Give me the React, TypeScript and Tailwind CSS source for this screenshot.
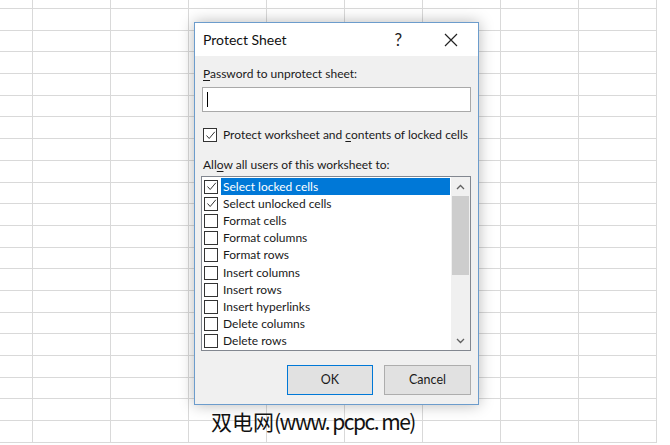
import React from 'react';

const items = [
  { label: 'Select locked cells', checked: true, selected: true },
  { label: 'Select unlocked cells', checked: true },
  { label: 'Format cells' },
  { label: 'Format columns' },
  { label: 'Format rows' },
  { label: 'Insert columns' },
  { label: 'Insert rows' },
  { label: 'Insert hyperlinks' },
  { label: 'Delete columns' },
  { label: 'Delete rows' },
];

const Check = () => (
  <svg width="11" height="11" viewBox="0 0 11 11" className="block">
    <polyline points="1.5,5.5 4.2,8.5 9.8,1.8" fill="none" stroke="#333" strokeWidth="1" />
  </svg>
);

const Box = ({ checked }: { checked?: boolean }) => (
  <div className="w-[14px] h-[14px] shrink-0 border border-[#333] bg-white flex items-center justify-center">
    {checked && <Check />}
  </div>
);

const Sheet = () => {
  const cells = [];
  for (let i = 0; i < 21 * 9; i++) {
    cells.push(<div key={i} className="border-r border-b border-[#d9d9d9]" />);
  }
  return (
    <div className="grid grid-cols-[33px_repeat(8,78px)] grid-rows-[9px_repeat(20,21.7px)]">
      {cells}
    </div>
  );
};

export default function App() {
  return (
    <div className="relative w-[670px] h-[445px] overflow-hidden bg-white font-['Lato',sans-serif] text-[#1a1a1a]">
      <Sheet />

      {/* dialog window */}
      <div className="absolute left-[194px] top-[22px] w-[285px] h-[383px] border border-[#6c9ccc] bg-[#f0f0f0] shadow-[0_0_14px_rgba(0,0,0,0.28)] flex flex-col">
        <div className="h-[33px] bg-white flex items-center pl-[8px] pr-[20px] shrink-0">
          <span className="text-[14px] text-[#111]">Protect Sheet</span>
          <span className="ml-auto mr-[42px] text-[17px] text-[#222]">?</span>
          <svg width="14" height="14" viewBox="0 0 14 14">
            <path d="M1 1L13 13M13 1L1 13" stroke="#222" strokeWidth="1.2" />
          </svg>
        </div>

        <div className="flex flex-col px-[7px] pt-[10px] text-[12px] leading-[16px] whitespace-nowrap">
          <div className="pl-px">
            <span className="underline underline-offset-2">P</span>assword to unprotect sheet:
          </div>
          <div className="mt-[5px] h-[25px] border border-[#a9a9a9] bg-white flex items-center pl-[4px]">
            <div className="w-px h-[15px] bg-black" />
          </div>

          <div className="mt-[16px] h-[14px] flex items-center gap-[6px] pl-px">
            <Box checked />
            <span>
              Protect worksheet and <span className="underline underline-offset-2">c</span>ontents of locked cells
            </span>
          </div>

          <div className="mt-[15px] pl-px">
            All<span className="underline underline-offset-2">o</span>w all users of this worksheet to:
          </div>

          <div className="mt-[3px] -ml-px h-[175px] border border-[#828790] bg-white flex">
            <div className="flex-1 flex flex-col pt-px pl-[2px]">
              {items.map((it) => (
                <div key={it.label} className="h-[17.2px] flex items-center">
                  <Box checked={it.checked} />
                  <div
                    className={
                      it.selected
                        ? 'ml-[3px] flex-1 h-full flex items-center pl-[2px] bg-[#0078d7] text-white'
                        : 'ml-[3px] flex-1 h-full flex items-center pl-[2px]'
                    }
                  >
                    {it.label}
                  </div>
                </div>
              ))}
            </div>
            <div className="w-[19px] bg-[#f0f0f0] flex flex-col ml-px">
              <div className="h-[19px] flex items-center justify-center">
                <svg width="9" height="6" viewBox="0 0 9 6">
                  <polyline points="1,5 4.5,1.5 8,5" fill="none" stroke="#606060" strokeWidth="1.3" />
                </svg>
              </div>
              <div className="h-[79px] mx-px bg-[#cdcdcd]" />
              <div className="flex-1" />
              <div className="h-[19px] flex items-center justify-center">
                <svg width="9" height="6" viewBox="0 0 9 6">
                  <polyline points="1,1 4.5,4.5 8,1" fill="none" stroke="#606060" strokeWidth="1.3" />
                </svg>
              </div>
            </div>
          </div>

          <div className="mt-[14px] flex justify-end gap-[11px]">
            <button className="w-[86px] h-[30px] border border-[#0078d7] bg-[#e1e1e1] text-[12.5px]">OK</button>
            <button className="w-[87px] h-[30px] border border-[#adadad] bg-[#e1e1e1] text-[12.5px]">Cancel</button>
          </div>
        </div>
      </div>

      <div className="absolute left-[211px] top-[405px] text-[21px] leading-[32px] text-[#111] font-['Noto_Sans_CJK_SC',sans-serif]">
        双电网<span className="tracking-[-1.5px]">(www. pcpc. me)</span>
      </div>
    </div>
  );
}
